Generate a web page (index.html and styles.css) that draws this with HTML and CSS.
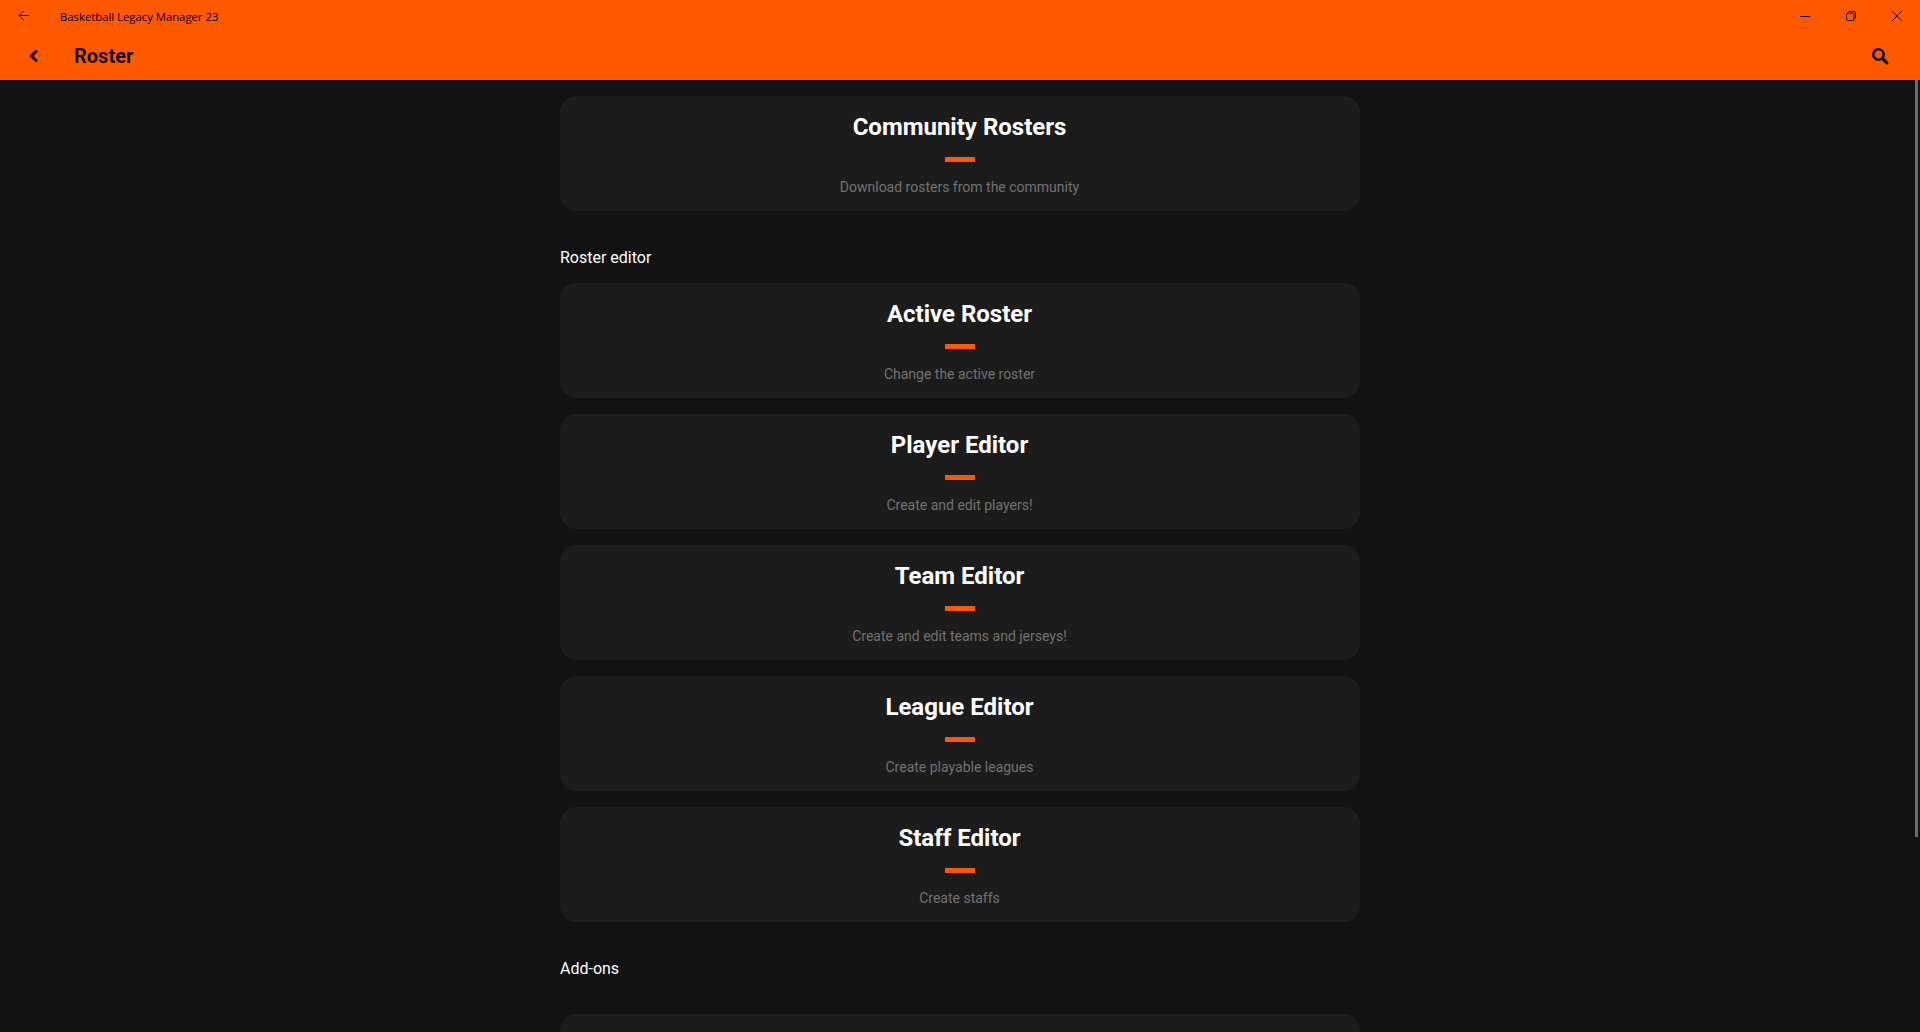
FILE: index.html
```html
<!DOCTYPE html>
<html lang="en">
<head>
    <meta charset="UTF-8">
    <meta name="viewport" content="width=device-width, initial-scale=1.0">
    <title>Basketball Legacy Manager 23</title>
    <link rel="stylesheet" href="styles.css">
</head>
<body>
    <header class="header">
        <div class="titlebar">
            <svg class="win-back" width="16" height="16" viewBox="0 0 16 16"><path d="M13 7.500H3M7.500 3 3 7.500 7.500 12" fill="none" stroke="#111" stroke-width="1"/></svg>
            <span class="app-name">Basketball Legacy Manager 23</span>
            <div class="win-buttons">
                <svg width="10" height="10" viewBox="0 0 10 10"><path d="M0 5.500h10" stroke="#111" stroke-width="1"/></svg>
                <svg width="10" height="10" viewBox="0 0 10 10"><rect x="0.500" y="2" width="7.500" height="7.500" rx="1.500" fill="none" stroke="#111"/><path d="M2.500 0.500h5.500a1.500 1.500 0 0 1 1.500 1.500v5.500" fill="none" stroke="#111"/></svg>
                <svg width="10" height="10" viewBox="0 0 10 10"><path d="M0 0l10 10M10 0 0 10" stroke="#111" stroke-width="1"/></svg>
            </div>
        </div>
        <div class="appbar">
            <svg class="back" width="12" height="16" viewBox="0 0 12 16"><path d="M9 2.500 3.500 8 9 13.500" fill="none" stroke="#111" stroke-width="3"/></svg>
            <h1>Roster</h1>
            <svg class="search" width="18" height="18" viewBox="0 0 18 18"><circle cx="7.500" cy="7.500" r="5.200" fill="none" stroke="#111" stroke-width="2.600"/><path d="M11.500 11.500 15.800 15.800" stroke="#111" stroke-width="3.200" stroke-linecap="round"/></svg>
        </div>
    </header>

    <main class="content">
        <div class="column">
            <a class="card">
                <h2>Community Rosters</h2>
                <span class="bar"></span>
                <p>Download rosters from the community</p>
            </a>

            <h3 class="group-label">Roster editor</h3>
            <a class="card">
                <h2>Active Roster</h2>
                <span class="bar"></span>
                <p>Change the active roster</p>
            </a>
            <a class="card">
                <h2>Player Editor</h2>
                <span class="bar"></span>
                <p>Create and edit players!</p>
            </a>
            <a class="card">
                <h2>Team Editor</h2>
                <span class="bar"></span>
                <p>Create and edit teams and jerseys!</p>
            </a>
            <a class="card">
                <h2>League Editor</h2>
                <span class="bar"></span>
                <p>Create playable leagues</p>
            </a>
            <a class="card">
                <h2>Staff Editor</h2>
                <span class="bar"></span>
                <p>Create staffs</p>
            </a>

            <h3 class="group-label group-label-wide">Add-ons</h3>
            <a class="card"></a>
        </div>
        <div class="scroll-thumb"></div>
    </main>
</body>
</html>
```

FILE: styles.css
```css
* {
    box-sizing: border-box;
}

body {
    font-family: Roboto, sans-serif;
    background-color: #121212;
    height: 100vh;
    margin: 0;
    overflow: hidden;
    display: flex;
    flex-direction: column;
}

.header {
    background-color: #ff5900;
    color: #111;
    height: 80px;
    flex-shrink: 0;
}

.titlebar {
    height: 32px;
    display: flex;
    align-items: center;
    padding-left: 16px;
}

.app-name {
    font-family: "Open Sans", sans-serif;
    font-size: 11.3px;
    color: #000;
    margin-left: 28px;
}

.win-buttons {
    margin-left: auto;
    display: flex;
    gap: 36px;
    padding-right: 18px;
}

.appbar {
    height: 48px;
    display: flex;
    align-items: center;
    padding: 0 31px 0 28px;
}

.appbar h1 {
    font-size: 20px;
    font-weight: 700;
    margin: 0 0 0 34px;
}

.search {
    margin-left: auto;
}

.content {
    flex: 1;
    overflow: hidden;
    position: relative;
}

.column {
    width: 800px;
    margin: 0 auto;
    padding-top: 16px;
    display: flex;
    flex-direction: column;
    gap: 16px;
}

.card {
    height: 115px;
    flex-shrink: 0;
    background-color: #1c1c1c;
    border-radius: 16px;
    display: flex;
    flex-direction: column;
    align-items: center;
    color: #fff;
    padding: 16px 1px 0 0;
}

.card h2 {
    font-size: 24px;
    line-height: 30px;
    font-weight: 700;
    margin: 0;
}

.bar {
    width: 30px;
    height: 5px;
    background-color: #ff5900;
    margin-top: 15px;
}

.card p {
    font-size: 14px;
    line-height: 18px;
    color: #717171;
    margin: 16px 0 0;
}

.group-label {
    font-size: 16px;
    line-height: 20px;
    font-weight: 400;
    color: #fff;
    margin: 21px 0 -1px;
}

.group-label-wide {
    margin-bottom: 19px;
}

.scroll-thumb {
    position: absolute;
    top: 0;
    right: 2px;
    width: 3px;
    height: 757px;
    background-color: #6a6a6a;
}
```
